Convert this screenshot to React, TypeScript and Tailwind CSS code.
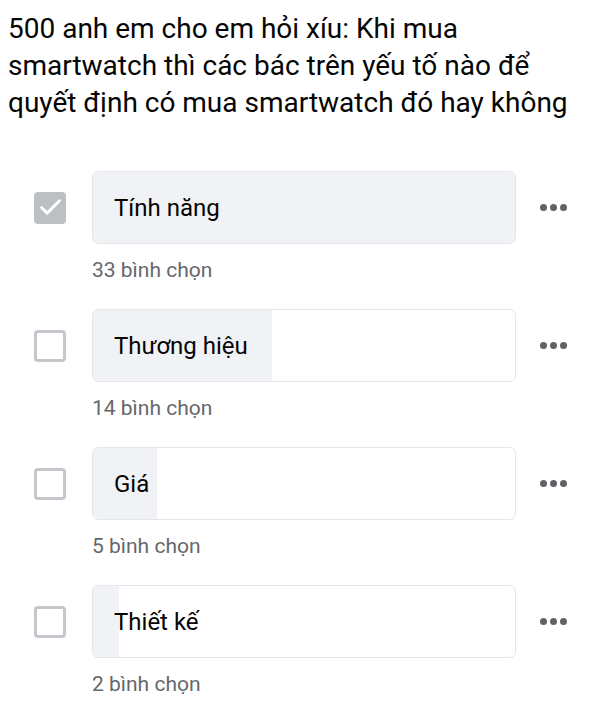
import { Check } from 'lucide-react'

const options = [
  { label: 'Tính năng', votes: 33, checked: true },
  { label: 'Thương hiệu', votes: 14, checked: false },
  { label: 'Giá', votes: 5, checked: false },
  { label: 'Thiết kế', votes: 2, checked: false },
]

const maxVotes = 33

export default function App() {
  return (
    <div className="bg-white min-h-[712px] w-[600px] font-['Roboto',sans-serif] text-[#050505]">
      <h1 className="pl-2 pt-[10px] pr-2 text-[28px] leading-[37px] font-normal">
        500 anh em cho em hỏi xíu: Khi mua smartwatch thì các bác trên yếu tố nào để quyết định có mua smartwatch đó hay không
      </h1>

      <div className="mt-[50px] flex flex-col gap-[25px]">
        {options.map((o) => (
          <div key={o.label}>
            <div className="flex items-center pl-[34px]">
              {o.checked ? (
                <div className="w-[32px] h-[32px] rounded-[4px] bg-[#bcc0c4] flex items-center justify-center">
                  <Check size={27} strokeWidth={2.6} className="text-white" />
                </div>
              ) : (
                <div className="w-[32px] h-[32px] rounded-[4px] border-[3px] border-[#c4c7cb]" />
              )}
              <div className="relative ml-[26px] w-[424px] h-[73px] rounded-[6px] border border-[#e4e6e9] overflow-hidden">
                <div
                  className="absolute inset-y-0 left-0 bg-[#f0f2f5]"
                  style={{ width: `${(o.votes / maxVotes) * 100}%` }}
                />
                <div className="relative h-full flex items-center pl-[21px] text-[24px]">{o.label}</div>
              </div>
              <div className="ml-[24px] flex gap-[3px]">
                <span className="w-[7px] h-[7px] rounded-full bg-[#606266]" />
                <span className="w-[7px] h-[7px] rounded-full bg-[#606266]" />
                <span className="w-[7px] h-[7px] rounded-full bg-[#606266]" />
              </div>
            </div>
            <p className="ml-[92px] mt-[12px] text-[21px] leading-[28px] text-[#65676b]">{o.votes} bình chọn</p>
          </div>
        ))}
      </div>
    </div>
  )
}
